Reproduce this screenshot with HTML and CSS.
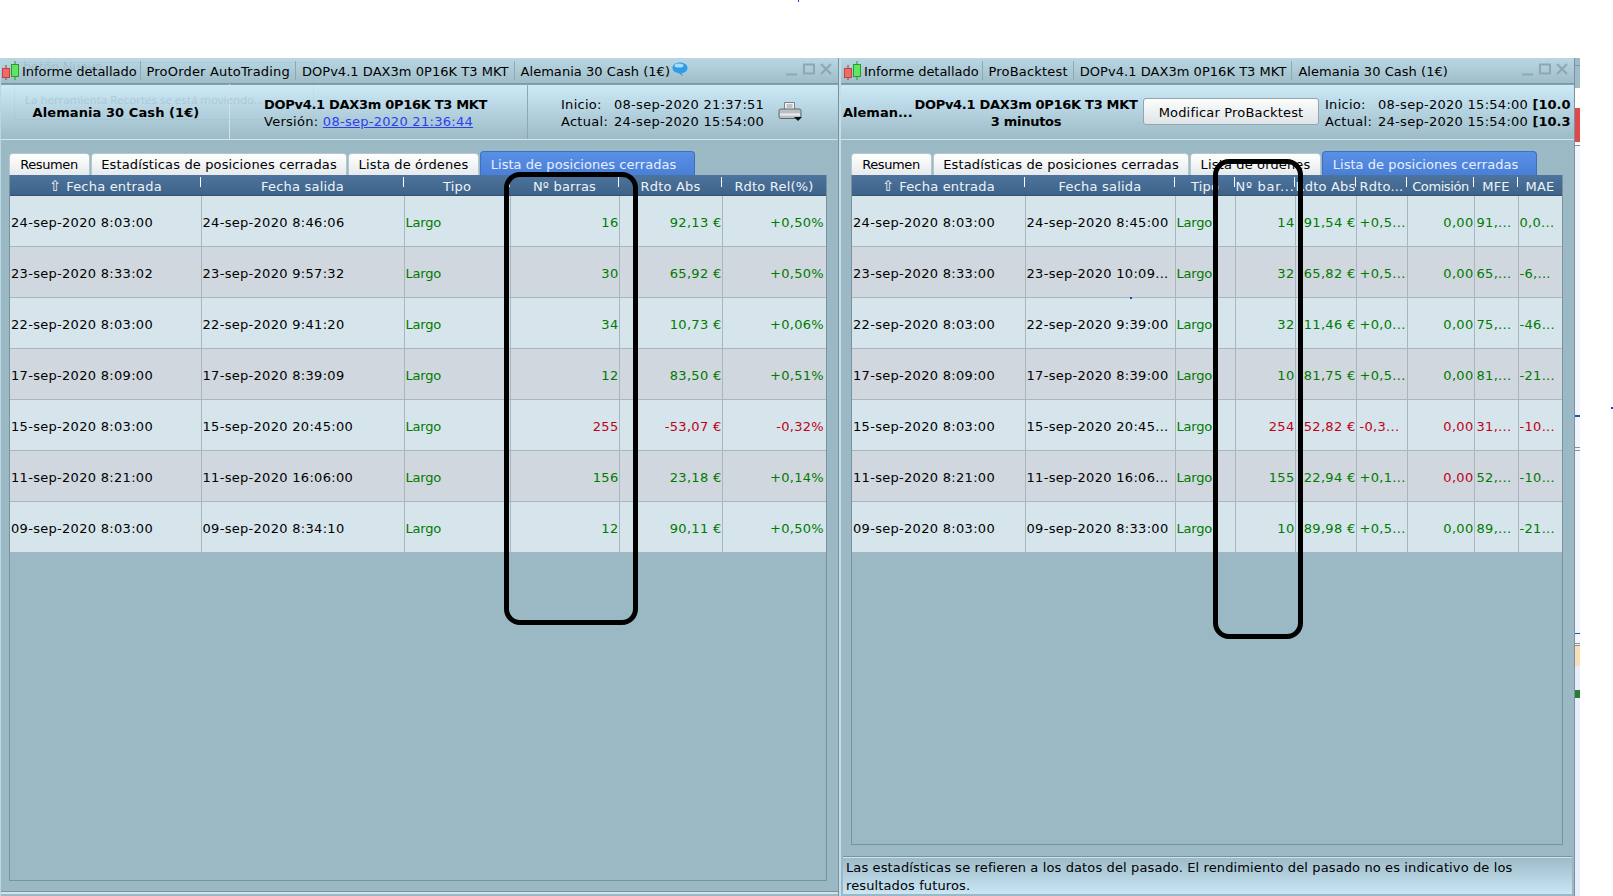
FILE: index.html
```html
<!DOCTYPE html>
<html lang="es">
<head>
<meta charset="utf-8">
<title>Informe detallado</title>
<link rel="stylesheet" href="styles.css">
</head>
<body>
<div class="screen">
  <div class="top-white"><span class="dot"></span></div>
  <div class="desk">
    <section class="win win-left">
      <div class="titlebar">
        <svg class="candles" width="19" height="20" viewBox="0 0 19 20"><path d="M5 4v15" stroke="#a33" fill="none"/><rect x="1.5" y="7.5" width="7" height="9" fill="#f06a6a" stroke="#b44"/><path d="M14 0v19" stroke="#2a9a2a" fill="none"/><rect x="10.5" y="3.5" width="7" height="12" fill="#5fe85f" stroke="#2a9a2a"/></svg>
        <span class="t t-first">Informe detallado</span><span class="t t-wide">ProOrder AutoTrading</span><span class="t">DOPv4.1 DAX3m 0P16K T3 MKT</span><span class="t t-last">Alemania 30 Cash (1€)</span>
        <svg class="bubble" width="16" height="15" viewBox="0 0 16 15"><path d="M8 .5c4.200 0 7.500 2.400 7.500 5.400s-3 5-6 5.200l1.500 3.200-4.500-3.300C3 10.500.5 8.600.5 5.900.5 2.900 3.800.5 8 .5z" fill="#2f9be8"/><ellipse cx="7" cy="3.500" rx="4.500" ry="2" fill="#a8dcfb"/></svg>
        <div class="controls">
          <svg width="46" height="14" viewBox="0 0 46 14"><path d="M0 11.500h11" stroke="#8fa7b2" stroke-width="2"/><rect x="18" y="1.500" width="10" height="9" fill="none" stroke="#8fa7b2" stroke-width="2"/><path d="M35 1l10 10M45 1L35 11" stroke="#8fa7b2" stroke-width="2.200"/></svg>
        </div>
      </div>
      <div class="infobar">
        <div class="info-symbol">Alemania 30 Cash (1€)</div>
        <div class="info-name">
          <div class="bold">DOPv4.1 DAX3m 0P16K T3 MKT</div>
          <div>Versión: <a class="link" href="#">08-sep-2020 21:36:44</a></div>
        </div>
        <div class="info-dates">
          <div class="dates"><div><span class="lbl">Inicio:</span>08-sep-2020 21:37:51</div><div><span class="lbl">Actual:</span>24-sep-2020 15:54:00</div></div>
          <svg class="printer" width="24" height="22" viewBox="0 0 24 22"><path d="M6.500 1.500h10v8h-10z" fill="#f2f4f5" stroke="#7a8488"/><path d="M8.500 4h6M8.500 6h6" stroke="#8a9498"/><path d="M1 9.500q0-1.500 2-1.500h18q2 0 2 1.500v6q0 2-2 2H3q-2 0-2-2z" fill="#b9c0c4" stroke="#5f686d"/><path d="M2 13.500h20" stroke="#ecefef" stroke-width="2"/><path d="M16 16h8l-4 4z" fill="#111"/></svg>
        </div>
      </div>
      <div class="content content-left">
        <div class="tabs">
          <span class="tab tab-a">Resumen</span><span class="tab tab-b">Estadísticas de posiciones cerradas</span><span class="tab tab-c">Lista de órdenes</span><span class="tab tab-on">Lista de posiciones cerradas</span>
        </div>
        <div class="frame">
          <table class="grid grid-left">
            <colgroup><col class="l1"><col class="l2"><col class="l3"><col class="l4"><col class="l5"><col class="l6"></colgroup>
            <thead><tr><th><span class="sort">⇧</span> Fecha entrada</th><th>Fecha salida</th><th>Tipo</th><th>Nº barras</th><th>Rdto Abs</th><th>Rdto Rel(%)</th></tr></thead>
            <tbody>
              <tr><td>24-sep-2020 8:03:00</td><td>24-sep-2020 8:46:06</td><td class="g">Largo</td><td class="g r">16</td><td class="g r">92,13 €</td><td class="g r">+0,50%</td></tr>
              <tr><td>23-sep-2020 8:33:02</td><td>23-sep-2020 9:57:32</td><td class="g">Largo</td><td class="g r">30</td><td class="g r">65,92 €</td><td class="g r">+0,50%</td></tr>
              <tr><td>22-sep-2020 8:03:00</td><td>22-sep-2020 9:41:20</td><td class="g">Largo</td><td class="g r">34</td><td class="g r">10,73 €</td><td class="g r">+0,06%</td></tr>
              <tr><td>17-sep-2020 8:09:00</td><td>17-sep-2020 8:39:09</td><td class="g">Largo</td><td class="g r">12</td><td class="g r">83,50 €</td><td class="g r">+0,51%</td></tr>
              <tr><td>15-sep-2020 8:03:00</td><td>15-sep-2020 20:45:00</td><td class="g">Largo</td><td class="n r">255</td><td class="n r">-53,07 €</td><td class="n r">-0,32%</td></tr>
              <tr><td>11-sep-2020 8:21:00</td><td>11-sep-2020 16:06:00</td><td class="g">Largo</td><td class="g r">156</td><td class="g r">23,18 €</td><td class="g r">+0,14%</td></tr>
              <tr><td>09-sep-2020 8:03:00</td><td>09-sep-2020 8:34:10</td><td class="g">Largo</td><td class="g r">12</td><td class="g r">90,11 €</td><td class="g r">+0,50%</td></tr>
            </tbody>
          </table>
        </div>
      </div>
      <div class="ghost ghost-box"></div>
      <div class="ghost ghost-a">botón Nuevo</div>
      <div class="ghost ghost-b">La herramienta Recortes se está moviendo...</div>
    </section>

    <section class="win win-right">
      <div class="titlebar">
        <svg class="candles" width="19" height="20" viewBox="0 0 19 20"><path d="M5 4v15" stroke="#a33" fill="none"/><rect x="1.500" y="7.500" width="7" height="9" fill="#f06a6a" stroke="#b44"/><path d="M14 0v19" stroke="#2a9a2a" fill="none"/><rect x="10.500" y="3.500" width="7" height="12" fill="#5fe85f" stroke="#2a9a2a"/></svg>
        <span class="t t-first">Informe detallado</span><span class="t t-wide">ProBacktest</span><span class="t">DOPv4.1 DAX3m 0P16K T3 MKT</span><span class="t t-last">Alemania 30 Cash (1€)</span>
        <div class="controls">
          <svg width="46" height="14" viewBox="0 0 46 14"><path d="M0 11.500h11" stroke="#8fa7b2" stroke-width="2"/><rect x="18" y="1.500" width="10" height="9" fill="none" stroke="#8fa7b2" stroke-width="2"/><path d="M35 1l10 10M45 1L35 11" stroke="#8fa7b2" stroke-width="2.200"/></svg>
        </div>
      </div>
      <div class="infobar infobar-right">
        <div class="bold sym-short">Aleman...</div>
        <div class="bold name-center"><div>DOPv4.1 DAX3m 0P16K T3 MKT</div><div>3 minutos</div></div>
        <button class="modify">Modificar ProBacktest</button>
        <div class="dates dates-right"><div><span class="lbl">Inicio:</span>08-sep-2020 15:54:00 <b>[10.0</b></div><div><span class="lbl">Actual:</span>24-sep-2020 15:54:00 <b>[10.3</b></div></div>
      </div>
      <div class="content content-right">
        <div class="tabs">
          <span class="tab tab-a">Resumen</span><span class="tab tab-b">Estadísticas de posiciones cerradas</span><span class="tab tab-c">Lista de órdenes</span><span class="tab tab-on">Lista de posiciones cerradas</span>
        </div>
        <div class="frame">
          <table class="grid grid-right">
            <colgroup><col class="p1"><col class="p2"><col class="p3"><col class="p4"><col class="p5"><col class="p6"><col class="p7"><col class="p8"><col class="p9"></colgroup>
            <thead><tr><th><span class="sort">⇧</span> Fecha entrada</th><th>Fecha salida</th><th>Tipo</th><th class="th-bars">Nº bar...</th><th>Rdto Abs</th><th>Rdto...</th><th class="th-com">Comisión</th><th>MFE</th><th>MAE</th></tr></thead>
            <tbody>
              <tr><td>24-sep-2020 8:03:00</td><td>24-sep-2020 8:45:00</td><td class="g">Largo</td><td class="g r">14</td><td class="g r">91,54 €</td><td class="g">+0,5...</td><td class="g r">0,00</td><td class="g">91,...</td><td class="g">0,0...</td></tr>
              <tr><td>23-sep-2020 8:33:00</td><td>23-sep-2020 10:09...</td><td class="g">Largo</td><td class="g r">32</td><td class="g r">65,82 €</td><td class="g">+0,5...</td><td class="g r">0,00</td><td class="g">65,...</td><td class="g">-6,...</td></tr>
              <tr><td>22-sep-2020 8:03:00</td><td>22-sep-2020 9:39:00</td><td class="g">Largo</td><td class="g r">32</td><td class="g r">11,46 €</td><td class="g">+0,0...</td><td class="g r">0,00</td><td class="g">75,...</td><td class="g">-46...</td></tr>
              <tr><td>17-sep-2020 8:09:00</td><td>17-sep-2020 8:39:00</td><td class="g">Largo</td><td class="g r">10</td><td class="g r">81,75 €</td><td class="g">+0,5...</td><td class="g r">0,00</td><td class="g">81,...</td><td class="g">-21...</td></tr>
              <tr><td>15-sep-2020 8:03:00</td><td>15-sep-2020 20:45...</td><td class="g">Largo</td><td class="n r">254</td><td class="n r">52,82 €</td><td class="n">-0,3...</td><td class="n r">0,00</td><td class="n">31,...</td><td class="n">-10...</td></tr>
              <tr><td>11-sep-2020 8:21:00</td><td>11-sep-2020 16:06...</td><td class="g">Largo</td><td class="g r">155</td><td class="g r">22,94 €</td><td class="g">+0,1...</td><td class="n r">0,00</td><td class="g">52,...</td><td class="g">-10...</td></tr>
              <tr><td>09-sep-2020 8:03:00</td><td>09-sep-2020 8:33:00</td><td class="g">Largo</td><td class="g r">10</td><td class="g r">89,98 €</td><td class="g">+0,5...</td><td class="g r">0,00</td><td class="g">89,...</td><td class="g">-21...</td></tr>
            </tbody>
          </table>
        </div>
      </div>
      <div class="footer">Las estadísticas se refieren a los datos del pasado. El rendimiento del pasado no es indicativo de los resultados futuros.</div>
    </section>
    <div class="sliver"></div>
  </div>
  <div class="speck speck-a"></div>
  <div class="speck speck-b"></div>
  <div class="mark mark-left"></div>
  <div class="mark mark-right"></div>
</div>
</body>
</html>
```

FILE: styles.css
```css
* { box-sizing: border-box; }
html, body { margin: 0; padding: 0; background: #fff; }
body { font: 13px "DejaVu Sans", Verdana, sans-serif; color: #000; overflow: hidden; }
.screen { position: relative; width: 1613px; height: 896px; overflow: hidden; }
.top-white { height: 58px; }
.dot { display: block; width: 1px; height: 2px; margin-left: 798px; background: #3a3ac0; }
.desk { display: flex; height: 838px; }

.win { position: relative; display: flex; flex-direction: column; background: #9bb8c5; height: 838px; }
.win-left { width: 839px; border-right: 1px solid #7a929e; border-left: 1px solid #b9d6e2; }
.win-right { width: 736px; border-left: 2px solid #c5dde8; border-right: 1px solid #7a929e; }

.titlebar { display: flex; align-items: center; height: 26px; flex: none; background: linear-gradient(#bad8e4, #9fbcc9); border-bottom: 1px solid #7f98a5; position: relative; letter-spacing: .04px; }
.candles { flex: none; margin: 0 2px 0 0; }
.win-right .candles { margin-left: 2px; }
.t { padding: 0 5px 0 6px; border-left: 1px solid #8fa8b4; height: 19px; line-height: 21px; white-space: nowrap; }
.t-first { border-left: none; padding-left: 0; padding-right: 3px; letter-spacing: -.04px; }
.t-wide { letter-spacing: .19px; }
.t-last { padding-right: 0; }
.bubble { margin-left: 2px; margin-top: -3px; }
.controls { position: absolute; right: 6px; top: 5px; line-height: 0; }

.infobar { display: flex; height: 56px; flex: none; background: linear-gradient(#cdeaf8, #9dbac7); border-bottom: 1px solid #d2e6ee; box-shadow: 0 1px 0 #84a0ad inset; letter-spacing: .28px; }
.info-symbol { width: 229px; flex: none; display: flex; align-items: center; justify-content: center; padding: 2px 0 0 2px; font-weight: bold; letter-spacing: .08px; border-right: 1px solid #d0e3ec; }
.info-name { width: 298px; flex: none; padding: 12px 0 0 34px; line-height: 17px; border-right: 1px solid #8ea7b3; }
.bold { font-weight: bold; letter-spacing: -.3px; white-space: nowrap; }
.link { color: #2c3ff0; }
.info-dates { flex: 1; display: flex; padding: 12px 0 0 33px; line-height: 17px; }
.dates { white-space: nowrap; }
.lbl { display: inline-block; width: 53px; }
.printer { margin: 5px 0 0 14px; }
.infobar-right { overflow: hidden; position: relative; }
.sym-short { width: 73px; flex: none; padding-left: 2px; line-height: 57px; letter-spacing: 0; }
.name-center { width: 224px; flex: none; text-align: center; line-height: 17px; padding-top: 12px; }
.modify { width: 176px; height: 27px; flex: none; margin: 14px 0 0 5px; padding: 2px 0 0; font: inherit; letter-spacing: .18px; color: #000; background: linear-gradient(#fcfdfd, #dfe4e6); border: 1px solid #93a5ad; border-radius: 3px; }
.dates-right { padding: 12px 0 0 6px; line-height: 17px; width: 252px; overflow: hidden; }
.dates-right b { letter-spacing: 0; }

.content { flex: 1; display: flex; flex-direction: column; min-height: 0; }
.content-left { padding: 11px 11px 11px 8px; border-bottom: 2px solid #d0e4ed; box-shadow: inset 0 -1px 0 #7a929e; margin-bottom: 2px; }
.content-right { padding: 11px 11px 12px 10px; }
.tabs { display: flex; height: 24px; align-items: flex-end; flex: none; letter-spacing: .14px; }
.tab { display: block; height: 22px; line-height: 21px; text-align: center; background: linear-gradient(#fff, #e6eaec); border: 1px solid #b8c6cd; border-bottom: none; border-radius: 4px 4px 0 0; margin-right: 1px; white-space: nowrap; }
.tab-a { width: 81px; padding-right: 1px; letter-spacing: -.4px; }
.tab-b { width: 256px; }
.tab-c { width: 131px; }
.tab-on { width: 215px; height: 24px; line-height: 25px; padding-right: 8px; margin-right: 0; letter-spacing: .05px; color: #e6f0ff; background: linear-gradient(#5a8fe6, #4a7fd8); border-color: #3d6fc0; }
.frame { flex: 1; border: 1px solid #7a929e; border-top: none; min-height: 0; }

.grid { border-collapse: collapse; table-layout: fixed; width: 100%; letter-spacing: .3px; }
.l1 { width: 191px; } .l2 { width: 203px; } .l3 { width: 106px; } .l4 { width: 109px; } .l5 { width: 103px; } .l6 { width: 104px; }
.p1 { width: 173px; } .p2 { width: 150px; } .p3 { width: 60px; } .p4 { width: 60px; } .p5 { width: 61px; } .p6 { width: 51px; } .p7 { width: 67px; } .p8 { width: 44px; } .p9 { width: 44px; }
.grid th { height: 20px; padding: 4px 0 0; line-height: 16px; font-weight: normal; letter-spacing: .2px; color: #eef3f7; background: linear-gradient(#4d749d, #3e6389); border-bottom: 1px solid #33536f; position: relative; white-space: nowrap; overflow: hidden; }
.grid th::after { content: ""; position: absolute; right: 0; top: 2px; height: 10px; width: 1px; background: #fff; }
.grid th:last-child::after { display: none; }
.sort { font-size: 15px; line-height: 10px; }
.grid .th-bars { letter-spacing: .7px; }
.grid .th-com { letter-spacing: -.4px; }
.grid td { height: 51px; padding: 2px 1px 0; border-right: 1px solid #a9b6bd; border-bottom: 1px solid #a9b6bd; white-space: nowrap; overflow: hidden; background: #d6e5ec; }
.grid tbody tr:nth-child(even) td { background: #d0d7de; }
.grid td:last-child { border-right: none; }
.grid td:nth-child(3) { letter-spacing: -.2px; }
.grid td.r { padding-right: 0; }
.grid td.r:last-child { padding-right: 2px; }
.grid-right td:nth-child(6) { padding-left: 3px; }
.grid-right td:nth-child(8) { padding-left: 2px; }
.g { color: #007a00; }
.n { color: #c00018; }
.r { text-align: right; }

.footer { height: 37px; flex: none; padding: 1px 3px 0; margin: 0 2px 2px 2px; line-height: 18px; background: linear-gradient(#9dbbc8, #c8e6f4); border-top: 1px solid #d0e4ed; box-shadow: 0 -1px 0 #7a929e; letter-spacing: .12px; }

.sliver { width: 5px; height: 838px; flex: none; background: linear-gradient(#a0bcc8 0 7px, #7f98a5 7px 8px, #a0bcc8 8px 30px, #fff 30px 50px, #e0484c 50px 84px, #fff 84px 87px, #8a8f96 87px 88px, #f3f5fe 88px 357px, #2050d0 357px 359px, #f3f5fe 359px 389px, #8a8f96 389px 390px, #f3f5fe 390px 392px, #8a8f96 392px 393px, #f3f5fe 393px 575px, #2050d0 575px 576px, #f3f5fe 576px 585px, #8a8f96 585px 586px, #f3f5fe 586px 587px, #8a8f96 587px 588px, #f8dfb8 588px 608px, #e9edfb 608px 632px, #2a7a3a 632px 640px, #e9edfb 640px 838px); }

.ghost { position: absolute; color: #5d7c8a; opacity: .2; font-family: "Open Sans", sans-serif; white-space: nowrap; pointer-events: none; }
.ghost-a { left: 22px; top: -1px; font-size: 13px; }
.ghost-b { left: 24px; top: 34px; font-size: 11.500px; }
.ghost-box { left: 13px; top: 4px; width: 300px; height: 58px; border: 1px solid #6d8a98; opacity: .08; }

.speck { position: absolute; width: 2px; height: 2px; background: #2040d0; }
.speck-a { left: 1130px; top: 297px; }
.speck-b { left: 1611px; top: 407px; }

.mark { position: absolute; border: 5px solid #000; border-radius: 16px; pointer-events: none; }
.mark-left { left: 504px; top: 172px; width: 134px; height: 453px; }
.mark-right { left: 1213px; top: 159px; width: 90px; height: 480px; }
```
